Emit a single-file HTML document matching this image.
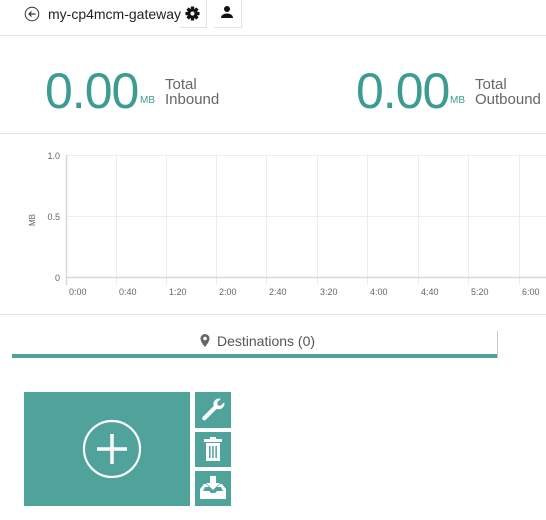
<!DOCTYPE html>
<html><head><style>
body{margin:0;width:546px;height:520px;background:#fff;font-family:"Liberation Sans",sans-serif;position:relative;overflow:hidden}
.a{position:absolute}
.big{font-size:50px;color:#3d9c92;letter-spacing:-1px;line-height:1}
.mb{font-size:10px;color:#3d9c92}
.lbl{font-size:15px;color:#666;line-height:15px}
.t{background:#4fa39b}
</style></head><body>
<svg class="a" style="left:24px;top:6px" width="16" height="16" viewBox="0 0 16 16"><circle cx="8" cy="8" r="6.8" fill="none" stroke="#333" stroke-width="1"/><path d="M11.5 8H5M7.5 5.5L5 8l2.5 2.5" fill="none" stroke="#333" stroke-width="1.2"/></svg>
<div class="a" style="left:48px;top:6px;font-size:14px;color:#222">my-cp4mcm-gateway</div>
<div class="a" style="left:180px;top:0;width:26px;height:27px;border-right:1px solid #e3e3e3;border-bottom:1px solid #e3e3e3"></div>
<svg class="a" style="left:185px;top:6px" width="15" height="15" viewBox="0 0 16 16">
<g fill="#111" transform="translate(8 8)">
<rect x="-1.8" y="-7.5" width="3.6" height="15" rx="0.6"/>
<rect x="-1.8" y="-7.5" width="3.6" height="15" rx="0.6" transform="rotate(45)"/>
<rect x="-1.8" y="-7.5" width="3.6" height="15" rx="0.6" transform="rotate(90)"/>
<rect x="-1.8" y="-7.5" width="3.6" height="15" rx="0.6" transform="rotate(135)"/>
<circle r="5.3"/>
</g>
<circle cx="8" cy="8" r="2.2" fill="#fff"/>
</svg>
<div class="a" style="left:214px;top:0;width:27px;height:27px;border-right:1px solid #e3e3e3;border-bottom:1px solid #e3e3e3"></div>
<svg class="a" style="left:220px;top:5px" width="14" height="14" viewBox="0 0 14 14"><circle cx="7" cy="4" r="3" fill="#111"/><path d="M1 13c0-3 3-4.5 6-4.5s6 1.5 6 4.5z" fill="#111"/></svg>
<div class="a" style="left:0;top:35px;width:546px;height:1px;background:#e3e3e3"></div>

<div class="a big" style="left:45px;top:66px">0.00</div>
<div class="a mb" style="left:140px;top:95px">MB</div>
<div class="a lbl" style="left:165px;top:77px">Total<br>Inbound</div>
<div class="a big" style="left:356px;top:66px">0.00</div>
<div class="a mb" style="left:450px;top:95px">MB</div>
<div class="a lbl" style="left:475px;top:77px">Total<br>Outbound</div>
<div class="a" style="left:0;top:133px;width:546px;height:1px;background:#e3e3e3"></div>

<svg class="a" style="left:0;top:140px" width="546" height="170">
<g stroke="#ececec" stroke-width="1">
<line x1="66" y1="15.5" x2="546" y2="15.5"/><line x1="66" y1="76.5" x2="546" y2="76.5"/>
<line x1="116.5" y1="15" x2="116.5" y2="145"/><line x1="166.5" y1="15" x2="166.5" y2="145"/><line x1="216.5" y1="15" x2="216.5" y2="145"/><line x1="266.5" y1="15" x2="266.5" y2="145"/><line x1="317.5" y1="15" x2="317.5" y2="145"/><line x1="367.5" y1="15" x2="367.5" y2="145"/><line x1="418.5" y1="15" x2="418.5" y2="145"/><line x1="468.5" y1="15" x2="468.5" y2="145"/><line x1="519.5" y1="15" x2="519.5" y2="145"/>
</g>
<line x1="66" y1="137.5" x2="546" y2="137.5" stroke="#d8d8d8" stroke-width="1.5"/>
<line x1="66.5" y1="15" x2="66.5" y2="145" stroke="#d8d8d8" stroke-width="1.5"/>
<g font-size="9" fill="#666" font-family="Liberation Sans">
<text x="60" y="19" text-anchor="end">1.0</text><text x="60" y="80" text-anchor="end">0.5</text><text x="60" y="141" text-anchor="end">0</text>
<text x="69" y="155">0:00</text><text x="119" y="155">0:40</text><text x="169" y="155">1:20</text><text x="219" y="155">2:00</text><text x="269" y="155">2:40</text><text x="320" y="155">3:20</text><text x="370" y="155">4:00</text><text x="421" y="155">4:40</text><text x="471" y="155">5:20</text><text x="522" y="155">6:00</text>
<text transform="translate(35 80) rotate(-90)" font-size="8" text-anchor="middle">MB</text>
</g>
</svg>
<div class="a" style="left:0;top:314px;width:546px;height:1px;background:#e3e3e3"></div>

<svg class="a" style="left:200px;top:334px" width="10" height="13" viewBox="0 0 10 13"><path d="M5 0a4.5 4.5 0 00-4.5 4.5C.5 8 5 13 5 13s4.5-5 4.5-8.5A4.5 4.5 0 005 0zm0 6.3a1.8 1.8 0 110-3.6 1.8 1.8 0 010 3.6z" fill="#666"/></svg>
<div class="a" style="left:217px;top:333px;font-size:14px;color:#555">Destinations (0)</div>
<div class="a" style="left:12px;top:354px;width:485px;height:4px;background:#4fa39b"></div>
<div class="a" style="left:497px;top:331px;width:1px;height:27px;background:#ccc"></div>

<div class="a t" style="left:24px;top:392px;width:166px;height:114px"></div>
<svg class="a" style="left:82px;top:419px" width="60" height="60" viewBox="0 0 60 60"><circle cx="30" cy="30" r="28" fill="none" stroke="#fff" stroke-width="2.2"/><path d="M30 15v30M15 30h30" stroke="#fff" stroke-width="3.5"/></svg>
<div class="a t" style="left:195px;top:392px;width:36px;height:36px"></div>
<svg class="a" style="left:200px;top:396px" width="27" height="27" viewBox="0 0 24 24"><path fill="#fff" d="M21.5 5.5l-3.2 3.2-2.6-.4-.4-2.6 3.2-3.2a5 5 0 00-6.3 6.3L2.5 18.5a1.8 1.8 0 002.6 2.6l9.7-9.7a5 5 0 006.7-5.9z"/></svg>
<div class="a t" style="left:195px;top:432px;width:36px;height:35px"></div>
<svg class="a" style="left:204px;top:437px" width="18" height="25" viewBox="0 0 18 25"><rect x="0" y="2" width="18" height="3" fill="#fff"/><rect x="6" y="0" width="6" height="2" fill="#fff"/><rect x="2" y="6" width="14" height="18" fill="#fff"/><g fill="#4fa39b"><rect x="5" y="9" width="1.5" height="12"/><rect x="8.2" y="9" width="1.5" height="12"/><rect x="11.4" y="9" width="1.5" height="12"/></g></svg>
<div class="a t" style="left:195px;top:471px;width:36px;height:35px"></div>
<svg class="a" style="left:200px;top:476px" width="26" height="24" viewBox="0 0 26 24"><path fill="#fff" d="M10 0h6v7h4l-7 7-7-7h4z"/><path fill="#fff" d="M0 13l4-5h2l3 3H5l-2 4h6l2 2h4l2-2h6l-2-4h-4l3-3h2l4 5v10H0z"/></svg>
</body></html>
